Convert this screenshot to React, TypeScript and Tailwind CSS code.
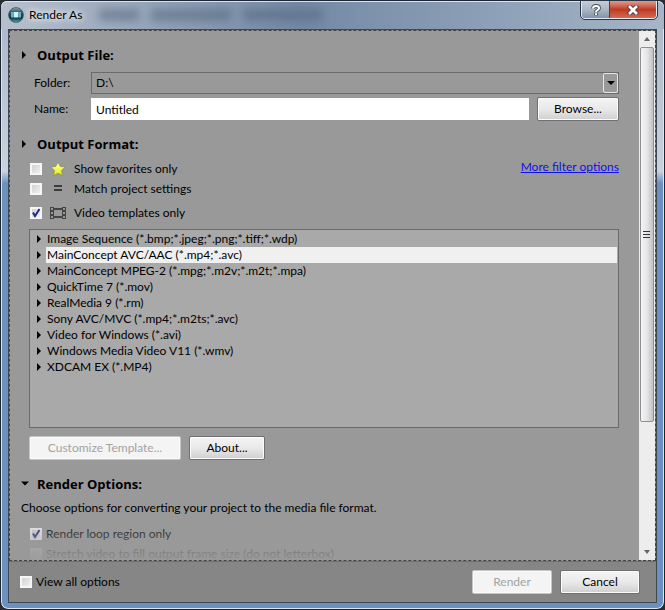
import { useState } from 'react';

const TEMPLATES = [
    'Image Sequence (*.bmp;*.jpeg;*.png;*.tiff;*.wdp)',
    'MainConcept AVC/AAC (*.mp4;*.avc)',
    'MainConcept MPEG-2 (*.mpg;*.m2v;*.m2t;*.mpa)',
    'QuickTime 7 (*.mov)',
    'RealMedia 9 (*.rm)',
    'Sony AVC/MVC (*.mp4;*.m2ts;*.avc)',
    'Video for Windows (*.avi)',
    'Windows Media Video V11 (*.wmv)',
    'XDCAM EX (*.MP4)',
];

const BUTTON = 'h-6 shrink-0 rounded-xs border border-[#707070] bg-linear-to-b from-[#f4f4f4] via-[#e9e9e9] via-50% to-[#cfcfcf] text-center shadow-[inset_0_0_0_1px_#fbfbfb] disabled:border-[#c4c6c6] disabled:bg-[#f4f4f4] disabled:bg-none disabled:text-[#a3a3a3]';
const HEADING = "flex items-center gap-2 font-['Open_Sans','Noto_Sans',sans-serif] text-[13px] leading-6 font-bold";

function Arrow({ open = false }: { open?: boolean }) {
    return (
        <svg viewBox="0 0 8 8" className="size-2 shrink-0" aria-hidden="true">
            <path d={open ? 'M0 1.500h8L4 5.500z' : 'M1 0v8l4-4z'} fill="#000" />
        </svg>
    );
}

function CheckBox({ id, defaultChecked = false, disabled = false }: { id: string; defaultChecked?: boolean; disabled?: boolean }) {
    return (
        <span className="grid size-3 shrink-0">
            <input
                id={id}
                type="checkbox"
                defaultChecked={defaultChecked}
                disabled={disabled}
                className="peer col-start-1 row-start-1 size-3 appearance-none border-2 border-[#f6f6f6] bg-linear-to-br from-[#c9ccd0] to-[#f6f6f6] bg-origin-border disabled:opacity-40"
            />
            <svg viewBox="0 0 12 12" className="pointer-events-none invisible col-start-1 row-start-1 size-3 peer-checked:visible" aria-hidden="true">
                <path d="M3 5.500 5 9 9.500 2" fill="none" stroke="#262a86" strokeWidth="2" />
            </svg>
        </span>
    );
}

function AppIcon() {
    return (
        <svg viewBox="0 0 16 16" className="size-4 shrink-0" aria-hidden="true">
            <defs>
                <linearGradient id="orb" x1="0" y1="0" x2="0" y2="1">
                    <stop offset="0" stopColor="#93a4ae" />
                    <stop offset="0.35" stopColor="#2c4f5f" />
                    <stop offset="0.7" stopColor="#14323d" />
                    <stop offset="1" stopColor="#3fb4c4" />
                </linearGradient>
            </defs>
            <circle cx="8" cy="8" r="7.4" fill="url(#orb)" stroke="#3a5260" strokeWidth="0.8" />
            <path d="M3 5h2v5.500H3zM11 5h2v5.500h-2z" fill="#5fb6c8" />
            <path d="M5.500 5h5v5.500h-5z" fill="#c9f4fa" />
        </svg>
    );
}

function StarIcon() {
    return (
        <svg viewBox="0 0 16 16" className="size-4 shrink-0" aria-hidden="true">
            <defs>
                <linearGradient id="star" x1="0" y1="0" x2="0" y2="1">
                    <stop offset="0" stopColor="#ffffc4" />
                    <stop offset="1" stopColor="#e4f000" />
                </linearGradient>
            </defs>
            <path d="M8 1l2.200 4.400 4.800.7-3.500 3.400.9 4.900L8 12.200l-4.400 2.200.9-4.900L1 6.100l4.800-.7z" fill="url(#star)" stroke="#80824c" strokeWidth="0.6" strokeLinejoin="round" />
        </svg>
    );
}

function EqualsIcon() {
    return (
        <svg viewBox="0 0 16 16" className="size-4 shrink-0" aria-hidden="true">
            <path d="M4 4h8v2H4zM4 8h8v2H4z" fill="#3c3c3c" />
        </svg>
    );
}

function FilmIcon() {
    return (
        <svg viewBox="0 0 16 12" className="h-3 w-4 shrink-0" aria-hidden="true">
            <path fillRule="evenodd" d="M0 0h4v12H0zM1 1v2h2V1zM1 5v2h2V5zM1 9v2h2V9zM12 0h4v12h-4zM13 1v2h2V1zM13 5v2h2V5zM13 9v2h2V9z" fill="#444" />
            <path d="M4 1h8v2H4zM4 9h8v2H4z" fill="#444" />
        </svg>
    );
}

function TitleBar() {
    return (
        <header className="flex h-7 shrink-0 items-start justify-between rounded-t-md bg-linear-to-r from-[#b7c0cd] via-[#7389a4] via-45% to-[#a6b5c8] px-[7px] shadow-[inset_0_1px_0_#dbe6f3]">
            <div className="flex h-7 items-center gap-1">
                <AppIcon />
                <h1 className="px-px [text-shadow:0_0_6px_#fff,0_0_8px_#fff]">Render As</h1>
                {/* window content showing through the glass */}
                <div className="ml-3 flex gap-3 opacity-60 blur-xs">
                    <span className="h-3 w-10 bg-[#5d6d83]" />
                    <span className="h-3 w-20 bg-[#5a6b82]" />
                    <span className="h-3 w-20 bg-[#586a82]" />
                </div>
            </div>
            <div className="flex h-[18px] overflow-hidden rounded-b border border-t-0 border-[#e4eaf2] outline outline-[#2b3546]">
                <button type="button" aria-label="Help" className="flex w-7 items-center justify-center border-r border-[#3b4657] bg-linear-to-b from-[#c5ced9] via-[#a9b6c5] to-[#8394a8]">
                    <svg viewBox="0 0 12 12" className="size-3" aria-hidden="true">
                        <path d="M3 4.500Q3 2 6 2t3 2.300Q9 5.500 7.500 6.200 6 7 6 8.200M6 9.300v2" fill="none" stroke="#444c58" strokeWidth="3.800" />
                        <path d="M3 4.500Q3 2 6 2t3 2.300Q9 5.500 7.500 6.200 6 7 6 8.200M6 9.300v1.800" fill="none" stroke="#fff" strokeWidth="2" />
                    </svg>
                </button>
                <button type="button" aria-label="Close" className="flex w-[46px] items-center justify-center bg-linear-to-b from-[#dd9b8e] via-[#c03a22] via-50% to-[#d4694f]">
                    <svg viewBox="0 0 12 10" className="h-[10px] w-3" aria-hidden="true">
                        <path d="M1.500 0.500l9 9M10.500 0.500l-9 9" stroke="#4b3a41" strokeWidth="4.500" />
                        <path d="M2 1l8 8M10 1L2 9" stroke="#fff" strokeWidth="2.700" />
                    </svg>
                </button>
            </div>
        </header>
    );
}

function ScrollBar() {
    return (
        <div className="flex w-4 shrink-0 flex-col bg-[#ededed]">
            <button type="button" aria-label="Scroll up" className="flex h-4 items-center justify-center">
                <svg viewBox="0 0 6 4" className="h-1 w-1.5" aria-hidden="true"><path d="M0 4h6L3 0z" fill="#666" /></svg>
            </button>
            <div className="mx-px flex grow-3 items-center justify-center rounded-xs border border-[#8f8f8f] bg-linear-to-r from-[#f5f5f5] via-[#e5e5e5] to-[#bfc2c6]">
                <svg viewBox="0 0 8 8" className="size-2" aria-hidden="true"><path d="M0 0h7v1H0zM0 3h7v1H0zM0 6h7v1H0z" fill="#333" /></svg>
            </div>
            <div className="grow" />
            <button type="button" aria-label="Scroll down" className="flex h-4 items-center justify-center">
                <svg viewBox="0 0 6 4" className="h-1 w-1.5" aria-hidden="true"><path d="M0 0h6L3 4z" fill="#666" /></svg>
            </button>
        </div>
    );
}

function OutputFile() {
    const [name, setName] = useState('Untitled');

    return (
        <section className="pt-3">
            <h2 className={HEADING}><Arrow />Output File:</h2>
            <div className="mt-[5px] flex items-center pl-[13px]">
                <label htmlFor="folder" className="w-[57px]">Folder:</label>
                <div className="grid grow">
                    <select id="folder" className="col-start-1 row-start-1 h-[22px] appearance-none border border-[#6b6b6b] px-1">
                        <option>D:\</option>
                    </select>
                    <span className="pointer-events-none col-start-1 row-start-1 my-px mr-px flex w-[15px] items-center justify-center justify-self-end rounded-xs border border-[#e6e6e6]">
                        <svg viewBox="0 0 8 4" className="h-1 w-2" aria-hidden="true"><path d="M0 0h8L4 4z" fill="#000" /></svg>
                    </span>
                </div>
            </div>
            <div className="mt-[3px] flex items-center pl-[13px]">
                <label htmlFor="name" className="w-[57px]">Name:</label>
                <input id="name" value={name} onChange={e => setName(e.target.value)} className="h-[22px] min-w-0 grow bg-white px-[5px]" />
                <button type="button" className={`${BUTTON} ml-2 w-[82px]`}>Browse...</button>
            </div>
        </section>
    );
}

function OutputFormat() {
    const [selected, setSelected] = useState(1);

    return (
        <section className="pt-[11px]">
            <h2 className={HEADING}><Arrow />Output Format:</h2>
            <div className="flex items-start justify-between pt-[3px] pl-[9px]">
                <div>
                    <div className="flex h-5 items-center gap-2">
                        <CheckBox id="favorites" />
                        <StarIcon />
                        <label htmlFor="favorites">Show favorites only</label>
                    </div>
                    <div className="flex h-5 items-center gap-2">
                        <CheckBox id="match" />
                        <EqualsIcon />
                        <label htmlFor="match">Match project settings</label>
                    </div>
                    <div className="mt-1 flex h-5 items-center gap-2">
                        <CheckBox id="video" defaultChecked />
                        <FilmIcon />
                        <label htmlFor="video">Video templates only</label>
                    </div>
                </div>
                <a href="#filters" className="text-[#1010f0] underline">More filter options</a>
            </div>
            <ul className="mt-[6px] ml-2 min-h-[199px] border border-[#6b6b6b] bg-[#a9a9a9] pt-px pr-px">
                {TEMPLATES.map((template, i) => (
                    <li key={template}>
                        <button type="button" onClick={() => setSelected(i)} className="flex w-full items-center gap-0.5 pl-1.5">
                            <Arrow />
                            <span className={i === selected ? 'grow bg-[#f0f0f0] pl-px text-left' : 'grow pl-px text-left'}>{template}</span>
                        </button>
                    </li>
                ))}
            </ul>
            <div className="mt-2 ml-2 flex gap-2">
                <button type="button" disabled className={`${BUTTON} w-[152px]`}>Customize Template...</button>
                <button type="button" className={`${BUTTON} w-[76px]`}>About...</button>
            </div>
        </section>
    );
}

function RenderOptions() {
    return (
        <section className="pt-3">
            <h2 className={HEADING}><Arrow open />Render Options:</h2>
            <p className="mt-1">Choose options for converting your project to the media file format.</p>
            <div className="mt-2 pl-[9px]">
                <div className="flex h-5 items-center gap-1">
                    <CheckBox id="loop" defaultChecked />
                    <label htmlFor="loop">Render loop region only</label>
                </div>
                <div className="flex h-5 items-center gap-1">
                    <CheckBox id="stretch" disabled />
                    <label htmlFor="stretch" className="text-[#333]">Stretch video to fill output frame size (do not letterbox)</label>
                </div>
            </div>
        </section>
    );
}

export default function App() {
    return (
        <div className="h-screen bg-[#2a2a30]">
            <div className="flex h-full flex-col rounded-lg border border-[#1c2432] bg-linear-to-b from-[#a9b6c8] via-[#c9d2de] via-28% to-[#6c91bf] to-30% pb-[6px] font-[Lato,'Noto_Sans',sans-serif] text-xs leading-4 text-black shadow-[inset_0_0_0_1px_#dbe6f3]">
                <TitleBar />

                <div className="mx-[7px] flex min-h-0 grow flex-col border border-[#3f4750] bg-[#999]">
                    <div className="flex min-h-0 grow border border-dashed border-[#444]">
                        <main className="relative min-w-0 grow overflow-hidden pr-5 pl-[11px]">
                            <OutputFile />
                            <OutputFormat />
                            <RenderOptions />
                            {/* fades the options out where the pane is cut off */}
                            <div className="pointer-events-none absolute inset-x-0 bottom-0 h-10 bg-linear-to-b from-[#999]/10 to-[#999]/90" />
                        </main>
                        <ScrollBar />
                    </div>
                    <footer className="flex h-[41px] shrink-0 items-center gap-2 border-t border-[#6f6f6f] bg-[#868686] pr-4 pl-[11px]">
                        <div className="flex grow items-center gap-1">
                            <CheckBox id="all" />
                            <label htmlFor="all">View all options</label>
                        </div>
                        <button type="button" disabled className={`${BUTTON} w-20`}>Render</button>
                        <button type="button" className={`${BUTTON} w-20`}>Cancel</button>
                    </footer>
                </div>
            </div>
        </div>
    );
}
